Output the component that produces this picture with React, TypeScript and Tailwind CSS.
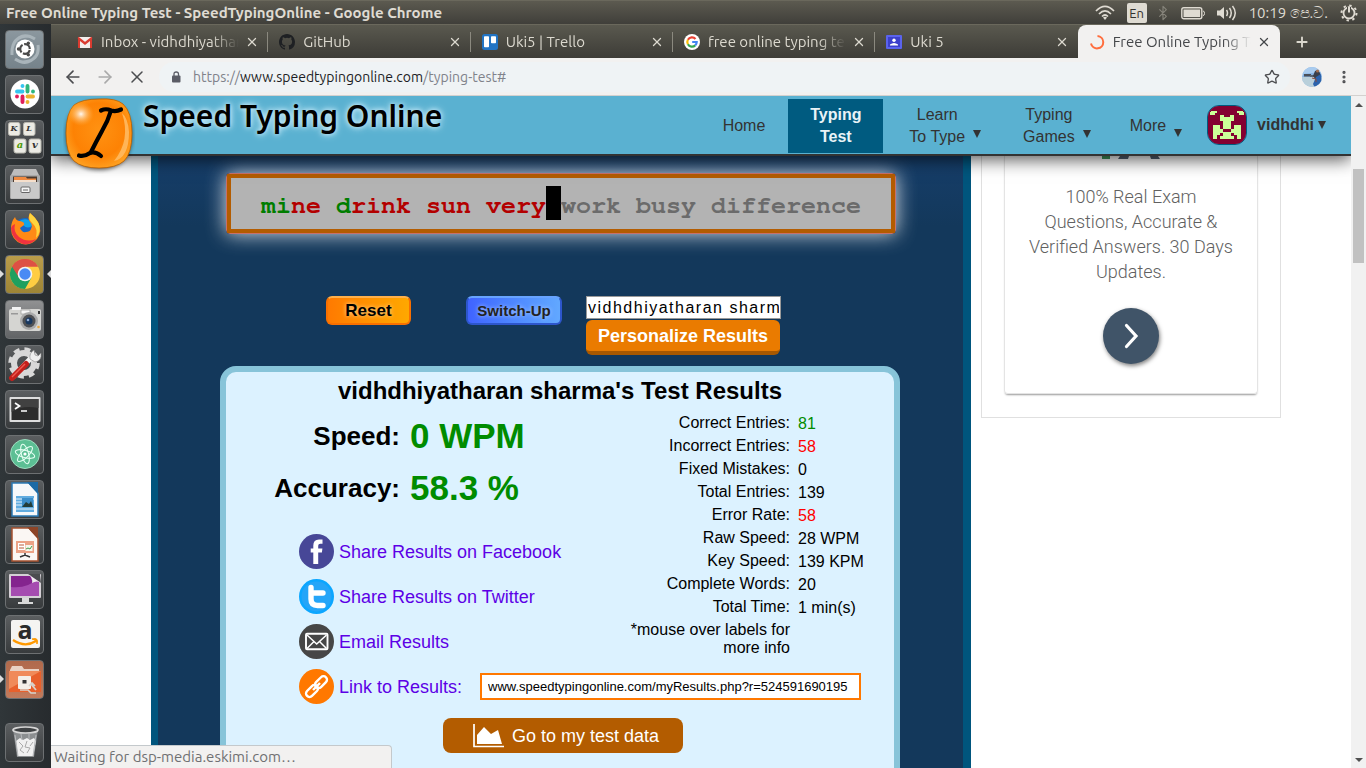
import type { ReactNode } from "react";
import { ArrowLeft, ArrowRight, X, Plus, Star, EllipsisVertical, Bluetooth } from "lucide-react";

const UI = "font-['Ubuntu','Noto_Sans','Open_Sans',sans-serif]";

/* ---------- system bar ---------- */

function SystemBar() {
  return (
    <header className="flex h-6 shrink-0 items-center justify-between border-t border-[#6a685c] bg-linear-to-b from-[#5c5a50] to-[#403f3a] pr-2 pl-1.5 text-[#dfdbd2]">
      <h1 className="text-[15px] leading-5 font-bold whitespace-nowrap">Free Online Typing Test - SpeedTypingOnline - Google Chrome</h1>
      <div className="flex items-center">
        <svg className="mr-3 h-5 w-5" viewBox="0 0 20 20" fill="none" stroke="#dfdbd2" strokeWidth="1.7">
          <path d="M1 8Q10 -1 19 8M4 11Q10 5 16 11M7 13.5Q10 10.500 13 13.500" />
          <path d="M8 14.500L10 17L12 14.500Q10 13 8 14.500Z" fill="#dfdbd2" stroke="none" />
        </svg>
        <span className="mr-2 flex h-5 w-5 items-center justify-center rounded-xs bg-[#dfdbd2] text-[13px] leading-5 text-[#33322e]">En</span>
        <Bluetooth className="mr-2.5 h-4 w-4 text-[#86847b]" strokeWidth={1.7} />
        <svg className="mr-3 h-4 w-6" viewBox="0 0 24 16">
          <rect x=".8" y="2.800" width="20" height="11" rx="2" fill="none" stroke="#dfdbd2" strokeWidth="1.4" />
          <rect x="2.500" y="4.500" width="16.600" height="7.600" fill="#dfdbd2" />
          <path d="M22 6q1.500 0 1.500 2.300T22 10.600" stroke="#dfdbd2" fill="none" />
        </svg>
        <svg className="mr-3 h-5 w-5" viewBox="0 0 20 20" fill="none" stroke="#dfdbd2" strokeWidth="1.5">
          <path d="M0 7.500h3l4-3.500v12L3 12.500H0Z" fill="#dfdbd2" stroke="none" />
          <path d="M9.500 7q2 3 0 6M12.500 5q3.500 5 0 10M15.500 3q5.500 7 0 14" />
        </svg>
        <time className="mr-3 text-[15px] leading-5 whitespace-nowrap">10:19 පෙ.ව.</time>
        <svg className="h-[18px] w-[18px]" viewBox="0 0 18 18" fill="none" stroke="#dfdbd2">
          <circle cx="9" cy="9" r="5.500" strokeWidth="1.800" />
          <circle cx="9" cy="9" r="7.500" strokeWidth="2" strokeDasharray="2.400 3.490" />
          <path d="M9 3v6" stroke="#4b4a44" strokeWidth="4" />
          <path d="M9 2.500v6" strokeWidth="2" />
        </svg>
      </div>
    </header>
  );
}

/* ---------- launcher ---------- */

function Tile({ label, tone = "bg-linear-to-b from-[#5b5e60] to-[#383b3d]", children, running, focused }: {
  label: string; tone?: string; children: ReactNode; running?: boolean; focused?: boolean;
}) {
  return (
    <button aria-label={label} className="relative flex h-10 w-[51px] shrink-0 items-center justify-center pr-0.5">
      {running && <svg className="absolute left-0 h-2 w-1" viewBox="0 0 4 8"><path d="M0 0L4 4L0 8Z" fill="#ddd" /></svg>}
      <span className={`flex h-[39px] w-[39px] items-center justify-center rounded-sm border border-[#6d7072] ${tone}`}>
        <svg className="h-9 w-9" viewBox="0 0 36 36">{children}</svg>
      </span>
      {focused && <svg className="absolute right-0 h-2 w-1" viewBox="0 0 4 8"><path d="M4 0L0 4L4 8Z" fill="#ddd" /></svg>}
    </button>
  );
}

function Launcher() {
  return (
    <nav aria-label="Launcher" className="flex w-[51px] shrink-0 flex-col gap-[5px] bg-linear-to-r from-[#303639] to-[#272b2e] pt-[5px] pb-1.5">
      <Tile label="Search" tone="bg-linear-to-b from-[#8b979e] to-[#76838b]">
        <path d="M5 24Q4 6 20 5M31 14Q33 30 16 31M8 28Q20 36 29 25M28 8Q15 0 7 12" fill="none" stroke="#a9b4ba" strokeWidth="3" />
        <circle cx="18" cy="18" r="9.500" fill="#fff" />
        <circle cx="18" cy="18" r="4.800" fill="none" stroke="#4a4a4a" strokeWidth="2.200" strokeDasharray="8.500 1.550" strokeDashoffset="-1" />
        <circle cx="11.500" cy="18" r="1.700" fill="#4a4a4a" /><circle cx="21.300" cy="12.300" r="1.700" fill="#4a4a4a" /><circle cx="21.300" cy="23.700" r="1.700" fill="#4a4a4a" />
      </Tile>
      <Tile label="Slack">
        <circle cx="18" cy="18" r="14.500" fill="#fff" />
        <g strokeWidth="3.900" strokeLinecap="round">
          <path d="M15.500 10v.1M10 15.500h5.500" stroke="#36c5f0" />
          <path d="M20.500 10v5.500M26 15.500v.1" stroke="#2eb67d" />
          <path d="M20.500 20.500H26M20.500 26v.1" stroke="#ecb22e" />
          <path d="M15.500 20.500V26M10 20.500v.1" stroke="#e01e5a" />
        </g>
      </Tile>
      <Tile label="Character map">
        <g fill="#ecebe4" stroke="#b9b8b0">
          <rect x="1.500" y="1.500" width="11.500" height="13" rx="2" /><rect x="16.500" y="1.500" width="11.500" height="13" rx="2" />
          <rect x="7" y="18" width="12" height="14" rx="2" /><rect x="22" y="18" width="12" height="14" rx="2" />
        </g>
        <g fontFamily="DejaVu Serif" fontSize="8" fontStyle="italic" fontWeight="bold" fill="#333" textAnchor="middle">
          <text x="7" y="10">K</text><text x="22" y="10">L</text><text x="13" y="27" fontSize="10" fill="#4e9a06">a</text><text x="28" y="27" fontSize="10">v</text>
        </g>
      </Tile>
      <Tile label="Files">
        <path d="M7 3h22l4 8H3Z" fill="#bdbdbd" /><rect x="3" y="9" width="30" height="24" rx="1.500" fill="#a9a9a9" />
        <rect x="6" y="10.500" width="24" height="6" fill="#4a3a30" /><path d="M7 11h12l1 1.500h9V16H7Z" fill="#f08a40" /><path d="M7 14h22v2H7Z" fill="#f5dfcc" />
        <rect x="4" y="16" width="28" height="16.500" fill="#c9c9c9" /><rect x="14" y="21" width="9" height="5.500" rx="1" fill="#f4f4f4" stroke="#666" /><path d="M16 24h5" stroke="#666" />
      </Tile>
      <Tile label="Firefox">
        <circle cx="18" cy="19" r="12" fill="#1668c9" /><path d="M11 11Q18 5 27 12Q22 20 16 14Z" fill="#13a4e8" />
        <path d="M4 17Q4 11 8 6Q9 10 13 10Q18 11 17 14L13 17Q15 22 19 21Q23 21 24 18Q26 14 23 11Q20 7 23 2Q28 6 31 11Q36 20 30 28Q24 35 15 33Q4 29 4 17Z" fill="#ff8a16" />
        <path d="M23 2Q29 7 31.500 12Q35 21 29 27Q31 17 26 13Q20 8 23 2Z" fill="#ffd53e" />
        <path d="M4 17Q5 29 16 33Q25 34 29 28Q20 32 12 26Q6 21 8 13Q5 14 4 17Z" fill="#f0333f" />
      </Tile>
      <Tile label="Google Chrome" tone="bg-linear-to-b from-[#b99c4a] to-[#9f8535]" running focused>
        <circle cx="18" cy="18" r="15" fill="#ffcd42" />
        <path d="M18 18L5 10.500A15 15 0 0 1 31 10.500H18Z" fill="#dd5144" />
        <path d="M18 18L5 10.500A15 15 0 0 0 18 33L24.500 21.500Z" fill="#1fa05f" />
        <path d="M18 10.500H31A15 15 0 0 0 5 10.500L11.500 21Z" fill="#dd5144" />
        <circle cx="18" cy="18" r="7.300" fill="#f4f4f4" /><circle cx="18" cy="18" r="5.700" fill="#4a8af4" />
      </Tile>
      <Tile label="Camera" tone="bg-linear-to-b from-[#909192] to-[#626466]">
        <rect x="2" y="8" width="32" height="22" rx="2" fill="#d5d5d2" /><rect x="5" y="6" width="9" height="3" fill="#f3f3f3" /><rect x="14" y="9" width="9" height="4" fill="#f7f7f7" stroke="#999" strokeWidth=".7" />
        <circle cx="22" cy="20" r="9" fill="#aaa" /><circle cx="22" cy="20" r="6.500" fill="#4d4f53" /><circle cx="22" cy="20" r="3.500" fill="#18375e" /><circle cx="21" cy="19" r="1.300" fill="#8ca8d0" /><rect x="31" y="10" width="2" height="3" fill="#333" />
        <rect x="4" y="12" width="7" height="1.500" fill="#999" /><circle cx="31.500" cy="26" r="1.300" fill="#ecaa45" />
      </Tile>
      <Tile label="System settings">
        <circle cx="17" cy="17" r="10" fill="none" stroke="#d8d8d8" strokeWidth="6" />
        <circle cx="17" cy="17" r="14" fill="none" stroke="#d8d8d8" strokeWidth="3.500" strokeDasharray="6 5" />
        <path d="M6 31L24 12" stroke="#f3f3f3" strokeWidth="5" /><path d="M23 13q-1-6 4-9l1 5l3 1l3-3q1 8-6 9Z" fill="#eee" stroke="#888" strokeWidth=".6" />
        <path d="M5 32L19 18" stroke="#c3201c" strokeWidth="6" strokeLinecap="round" /><path d="M5 31L18 18" stroke="#ee5b50" strokeWidth="1.500" />
      </Tile>
      <Tile label="Terminal">
        <rect x="2.500" y="6" width="31" height="25" rx="1" fill="#dedede" /><rect x="4.500" y="8" width="27" height="21" fill="#2c2c2c" /><path d="M4.500 8h27v9Q15 14 4.500 21Z" fill="#414141" />
        <path d="M8 12l4.500 3L8 18M14 20h6" stroke="#fff" fill="none" strokeWidth="1.700" />
      </Tile>
      <Tile label="Atom">
        <circle cx="18" cy="18" r="14.500" fill="#5cbf94" stroke="#9ddcbf" /><g fill="none" stroke="#e5fff3" strokeWidth="1.100">
          <ellipse cx="18" cy="18" rx="10" ry="3.600" transform="rotate(15 18 18)" /><ellipse cx="18" cy="18" rx="10" ry="3.600" transform="rotate(75 18 18)" /><ellipse cx="18" cy="18" rx="10" ry="3.600" transform="rotate(135 18 18)" />
        </g><circle cx="18" cy="18" r="1.600" fill="#fff" />
      </Tile>
      <Tile label="LibreOffice Writer">
        <path d="M5 2h17l9 10v23H5Z" fill="#f6f8fa" stroke="#2b79b5" strokeWidth="1.500" /><path d="M20 1h11v12Z" fill="#1c6aa5" />
        <rect x="9" y="15" width="18" height="16" fill="#61ace0" /><path d="M9 18h18M9 21h6M9 24h6M9 28h18" stroke="#e4f1fa" /><path d="M15 17h11v9H15Z" fill="#3b8dc9" /><path d="M15 26l4-5l3 2l2-3l2 6Z" fill="#243d38" />
      </Tile>
      <Tile label="LibreOffice Impress">
        <path d="M5 2h17l9 10v23H5Z" fill="#fbf7f4" stroke="#a6522f" strokeWidth="1.500" /><path d="M20 1h11v12Z" fill="#8d4427" />
        <rect x="9" y="15" width="18" height="12" fill="#eca286" /><rect x="11" y="17" width="7" height="7" fill="#fff" /><path d="M12 19h5M12 22h5" stroke="#bb5b3a" /><rect x="18.500" y="19" width="7" height="6" fill="#f4f7ec" /><path d="M19 23l2-1l2 1l2-3" stroke="#459a4a" fill="none" />
        <path d="M18 27v2M13 31l5-2l5 2" stroke="#333" fill="none" strokeWidth="1.500" />
      </Tile>
      <Tile label="Displays">
        <rect x="2" y="3" width="32" height="24" rx="1" fill="#d5d0d6" /><rect x="4" y="5" width="28" height="20" fill="#84248e" /><path d="M4 25V16Q20 18 32 7v18Z" fill="#a54cb0" />
        <path d="M21 3h12v1l1 8Z" fill="#4b4d4f" /><path d="M21 3Q26 7 25 12Q30 9 34 12Z" fill="#eee" /><path d="M15 27h7v4h4v2H11v-2h4Z" fill="#d9d9d9" />
      </Tile>
      <Tile label="Amazon">
        <rect x="4" y="4" width="29" height="28" rx="2" fill="#f5f4f2" /><text x="18" y="22.500" textAnchor="middle" fontFamily="Open Sans" fontSize="25" fontWeight="bold" fill="#2b2b2b">a</text>
        <path d="M6 24Q18 32 29 25" fill="none" stroke="#f90" strokeWidth="2.200" /><path d="M25 23q7-2 5 5q0-4-5-5Z" fill="#f90" stroke="#f90" />
      </Tile>
      <Tile label="Screenshots folder" tone="bg-linear-to-b from-[#b06a4c] to-[#c37a5b]" running>
        <path d="M3 9L5 5h10l2 3h15v4H3Z" fill="#e9d3c5" /><path d="M2 10h32v21H2Z" fill="#e8602c" /><path d="M2 10h32L2 28Z" fill="#f08a59" />
        <rect x="11" y="15" width="13" height="13" rx="1" fill="#f4efe8" /><rect x="15.500" y="19" width="4" height="3.500" fill="#333" /><path d="M22 25l3-3l3 3M24 23l5 6M13 29h8l3 3h5" stroke="#d8d2ca" fill="none" strokeWidth="1.700" />
      </Tile>
      <div className="flex-1" />
      <Tile label="Trash">
        <path d="M6 5h25l-4 28H10Z" fill="#8b8e90" /><ellipse cx="18.500" cy="6" rx="12.500" ry="3" fill="#3f4244" stroke="#d6d6d6" strokeWidth="1.700" />
        <path d="M9 17l4-3l3 2l4-2l3 2l4-2l2 3l-3 15H11Z" fill="#f0f0f0" /><path d="M12 18l4 4l-3 4l4 3M20 17l-2 6l5 1l-3 5M26 18l-3 4" stroke="#aaa" fill="none" /><path d="M8 11l3 21M14 10l1 6M22 10v5M29 11l-3 21" stroke="#b8babc" />
      </Tile>
    </nav>
  );
}

/* ---------- browser chrome ---------- */

const gmail = <svg className="h-4 w-4" viewBox="0 0 16 16"><rect x="1" y="3" width="14" height="11" rx="1" fill="#f3eeec" /><path d="M1 4v10h2V7l5 4l5-4v7h2V4L8 9Z" fill="#da3b30" /><path d="M1 3.500L8 9l7-5.500" fill="none" stroke="#da3b30" strokeWidth="1.600" /></svg>;
const github = <svg className="h-4 w-4" viewBox="0 0 16 16"><path fill="#1e2023" d="M8 0C3.580 0 0 3.580 0 8c0 3.540 2.290 6.530 5.470 7.590.4.070.55-.17.55-.38 0-.19-.01-.82-.01-1.490-2.010.37-2.530-.49-2.690-.94-.09-.23-.48-.94-.82-1.130-.28-.15-.68-.52-.01-.53.63-.01 1.080.58 1.230.82.72 1.210 1.870.87 2.330.66.07-.52.28-.87.51-1.070-1.780-.2-3.640-.89-3.640-3.950 0-.87.31-1.590.82-2.150-.08-.2-.36-1.020.08-2.120 0 0 .67-.21 2.200.82a7.600 7.600 0 0 1 4 0c1.530-1.040 2.200-.82 2.200-.82.44 1.100.16 1.920.08 2.120.51.56.82 1.270.82 2.150 0 3.070-1.870 3.750-3.650 3.950.29.25.54.73.54 1.480 0 1.070-.01 1.930-.01 2.200 0 .21.15.46.55.38A8 8 0 0 0 16 8c0-4.420-3.580-8-8-8Z" /></svg>;
const trello = <svg className="h-4 w-4" viewBox="0 0 16 16"><rect width="16" height="16" rx="2.500" fill="#2274c4" /><rect x="2" y="2.300" width="5" height="11" rx=".8" fill="#fff" /><rect x="9" y="2.300" width="5" height="7" rx=".8" fill="#fff" /></svg>;
const google = <svg className="h-4 w-4" viewBox="0 0 16 16" fill="none" strokeWidth="2.200"><circle cx="8" cy="8" r="8" fill="#fff" /><path d="M11.500 4.900A4.700 4.700 0 0 0 3.900 5.700" stroke="#ea4335" /><path d="M3.900 5.700a4.700 4.700 0 0 0 0 4.600" stroke="#fbbc05" /><path d="M3.900 10.300a4.700 4.700 0 0 0 7.300 1.100" stroke="#34a853" /><path d="M11.200 11.400Q12.700 10 12.700 8H8.200" stroke="#4285f4" /></svg>;
const classroom = <svg className="h-4 w-4" viewBox="0 0 16 16"><rect y="1" width="16" height="14" rx="1" fill="#5a63ee" /><rect x="2" y="3" width="12" height="10" fill="#3c40cb" /><circle cx="8" cy="6.300" r="1.700" fill="#fff" /><path d="M4 11.500V10.500Q8 7.500 12 10.500v1Z" fill="#fff" /></svg>;
const spinner = <svg className="h-4 w-4" viewBox="0 0 16 16"><path d="M8.500 2A6.200 6.200 0 1 1 2 9.500" fill="none" stroke="#ff6d3d" strokeWidth="2" /></svg>;

const tabs = [
  { title: "Inbox - vidhdhiyatharan", icon: gmail },
  { title: "GitHub", icon: github },
  { title: "Uki5 | Trello", icon: trello },
  { title: "free online typing test", icon: google },
  { title: "Uki 5", icon: classroom },
  { title: "Free Online Typing Test", icon: spinner, active: true },
];

function TabStrip() {
  return (
    <div className="flex h-[34px] shrink-0 items-stretch border-t border-[#6a685c] bg-linear-to-b from-[#5a594f] to-[#3d3c37] pl-[15px]">
      <div role="tablist" className="flex min-w-0 flex-1">
        {tabs.map((t, i) => (
          <div key={t.title} className={`flex min-w-0 flex-1 items-center ${t.active ? "rounded-t-lg bg-[#f2f1f0] text-[#45474a]" : "text-[#dcd9cf]"}`}>
            <button role="tab" aria-selected={!!t.active} className="flex min-w-0 flex-1 items-center gap-2 pl-[11px] text-left">
              <span className="shrink-0">{t.icon}</span>
              <span className="w-[138px] min-w-0 overflow-hidden text-[15px] leading-5 whitespace-nowrap [mask-image:linear-gradient(to_right,black_80%,transparent)]">{t.title}</span>
            </button>
            <button aria-label={`Close ${t.title}`} className="mr-2 ml-1 shrink-0"><X className="h-3.5 w-3.5" strokeWidth={2.2} /></button>
            <span className={`h-5 w-px shrink-0 ${i < 4 ? "bg-[#8b897f]" : ""}`} />
          </div>
        ))}
      </div>
      <button aria-label="New tab" className="flex w-[86px] items-center pl-3.5 text-[#dcd9cf]"><Plus className="h-4 w-4" strokeWidth={2.8} /></button>
    </div>
  );
}

function Toolbar() {
  return (
    <div className="flex h-[38px] shrink-0 items-center border-b border-[#d3d1cf] bg-[#f2f1f0] pr-[14px] pl-3 text-[#4c4d50]">
      <button aria-label="Back" className="mr-3"><ArrowLeft className="h-5 w-5" /></button>
      <button aria-label="Forward" className="mr-3 text-[#aaa]"><ArrowRight className="h-5 w-5" /></button>
      <button aria-label="Stop"><X className="h-5 w-5" strokeWidth={1.8} /></button>
      <div className="ml-3 flex h-[30px] flex-1 items-center rounded-full bg-[#eff3f5] pr-2.5 pl-3">
        <svg className="mr-3 h-3 w-2.5" viewBox="0 0 10 12"><rect x="1" y="4.500" width="8.500" height="7" rx="1" fill="#5a5c66" /><path d="M3 5V3q0-2 2.200-2T7.500 3v2" fill="none" stroke="#5a5c66" strokeWidth="1.300" /></svg>
        <span className="flex-1 text-sm text-[#80828a]">https://<span className="text-[#1c1d24]">www.speedtypingonline.com</span>/typing-test#</span>
        <button aria-label="Bookmark"><Star className="h-4 w-4" strokeWidth={2} /></button>
      </div>
      <button aria-label="Profile" className="mr-3.5 ml-3">
        <svg className="h-5 w-5 rounded-full" viewBox="0 0 20 20"><rect width="20" height="20" fill="#88b4e4" /><path d="M0 0h20v5L0 7Z" fill="#a9cbee" /><rect y="10" width="20" height="10" fill="#b9cfda" /><path d="M2 7h7v2.500H2Z" fill="#4a4f58" /><path d="M8 8h6v2H8Z" fill="#5c6470" /><path d="M13 4l3-1l2 3l1 5l-5 2l-3-4Z" fill="#3a3f4b" /><path d="M14 10l5-3l1 12l-7 2l-2-4Z" fill="#2c62ac" /><circle cx="15.500" cy="4" r="1.500" fill="#a66f4f" /><path d="M10 11l4 1v3" stroke="#8b4b3a" fill="none" /></svg>
      </button>
      <button aria-label="Menu"><EllipsisVertical className="h-4 w-4" strokeWidth={2.8} /></button>
    </div>
  );
}

/* ---------- site header ---------- */

function SiteLogo() {
  return (
    <svg className="h-[76px] w-[72px]" viewBox="0 0 72 76">
      <defs>
        <radialGradient id="orb" cx=".5" cy=".45" r=".65"><stop offset="0" stopColor="#ff9212" /><stop offset=".6" stopColor="#fd8204" /><stop offset="1" stopColor="#ffae2e" /></radialGradient>
        <radialGradient id="shine"><stop offset="0" stopColor="#fff" stopOpacity=".95" /><stop offset="1" stopColor="#ffb347" stopOpacity="0" /></radialGradient>
        <filter id="soft"><feGaussianBlur stdDeviation="2" /></filter>
      </defs>
      <path d="M36 3Q66 1 69 34Q70 71 37 72Q3 72 3 37Q3 3 36 3Z" fill="#000" opacity=".6" filter="url(#soft)" />
      <path d="M36 1Q53 0 60 6Q69 14 69 35Q69 55 61 63Q53 70 36 70Q19 70 11 63Q3 55 3 35Q3 15 11 7Q19 1 36 1Z" fill="url(#orb)" stroke="#b96000" strokeWidth=".8" />
      <ellipse cx="18" cy="16" rx="13" ry="12" fill="url(#shine)" />
      <path d="M59 15Q68 42 51 63Q66 60 66 34Q65 20 59 15Z" fill="#ffbc65" opacity=".85" />
      <path d="M38 12.500Q43 10 48 12.500Q53 14 58 11.500M48 12.500Q45 23 39 33Q33 44 28 54M16 57.500Q21 59 27 55Q32 53 38 58" fill="none" stroke="#000" strokeWidth="4.200" strokeLinecap="round" />
    </svg>
  );
}

function Avatar() {
  return (
    <svg className="h-10 w-10 shrink-0 rounded-xl border border-[#005b80]" viewBox="0 0 40 40" shapeRendering="crispEdges">
      <rect width="40" height="40" fill="#840031" />
      <path fill="#ccff99" d="M4 5h5v2H7v2H2V7ZM36 5h-5v2h2v2h5V7ZM13 9h4v3h6V9h4v7h-3v8h3v-4h8v15h-4v-4h-4v-3h-3v4h3v3H13v-3h3v-4h-3v3H9v4H5V20h8v4h3v-8h-3Z" />
      <path fill="#840031" d="M16 24h8v3h-8Z" />
    </svg>
  );
}

function Caret({ className = "" }: { className?: string }) {
  return <svg className={`h-2 w-2 shrink-0 ${className}`} viewBox="0 0 8 8"><path d="M0 0h8L4 8Z" fill="#333" /></svg>;
}

function SiteHeader() {
  return (
    <header className="relative z-10 flex h-[60px] shrink-0 items-center border-b-2 border-[#333] bg-[#5ab1d1] pr-[25px] font-['Liberation_Sans',Arial,sans-serif] leading-[22px] text-[#333] shadow-[0_4px_16px_rgba(0,0,0,0.65)]">
      <a href="#" aria-label="Speed Typing Online" className="flex flex-1 items-start gap-2 self-start pl-3 text-black no-underline">
        <span className="-mb-5 pt-0.5"><SiteLogo /></span>
        <span className="font-['Noto_Sans','Open_Sans',sans-serif] text-[30px] leading-10 font-semibold whitespace-nowrap [text-shadow:0_0_5px_#d9f2fc,0_0_8px_#c0e8f8]">Speed Typing Online</span>
      </a>
      <nav className="flex items-center pt-0.5">
        <a href="#" className="mr-[23px]">Home</a>
        <a href="#" className="mr-[26px] w-[95px] bg-[#005b80] py-[5px] text-center font-bold text-[#e8f3f7]">Typing<br />Test</a>
        <a href="#" className="mr-[42px] flex items-end gap-2 text-center"><span>Learn<br />To Type</span><Caret className="mb-2.5" /></a>
        <a href="#" className="mr-[39px] flex items-end gap-2 text-center"><span>Typing<br />Games</span><Caret className="mb-2.5" /></a>
        <a href="#" className="mr-[25px] flex items-end gap-2"><span>More</span><Caret /></a>
      </nav>
      <a href="#" className="flex items-center gap-2.5 font-bold"><Avatar /><span className="flex items-center gap-1">vidhdhi<Caret /></span></a>
    </header>
  );
}

/* ---------- page body ---------- */

const stats = [
  ["Correct Entries:", "81", "text-[#008c00]"],
  ["Incorrect Entries:", "58", "text-[#ff0000]"],
  ["Fixed Mistakes:", "0", "text-black"],
  ["Total Entries:", "139", "text-black"],
  ["Error Rate:", "58", "text-[#ff0000]"],
  ["Raw Speed:", "28 WPM", "text-black"],
  ["Key Speed:", "139 KPM", "text-black"],
  ["Complete Words:", "20", "text-black"],
  ["Total Time:", "1 min(s)", "text-black"],
];

function TypingBox() {
  return (
    <div className="ml-[68px] w-[670px] rounded-sm border border-[#c9706a] shadow-[0_0_20px_rgba(255,255,255,0.85)]">
      <div className="flex h-[59px] items-center justify-center border-4 border-[#b35c00] bg-[#b3b3b3] pt-1 font-['Courier_10_Pitch','FreeMono','Courier_New','Liberation_Mono',monospace] text-[25px] leading-[34px] font-bold whitespace-pre text-[#6b6b6b]">
        <span className="text-[#007d00]">mi</span><span className="text-[#b30000]">ne </span>
        <span className="text-[#007d00]">d</span><span className="text-[#b30000]">rink sun very</span>
        <span className="-mt-1.5 h-[34px] bg-black"> </span>
        <span>work busy difference</span>
      </div>
    </div>
  );
}

function ShareRow({ icon, label }: { icon: ReactNode; label: string }) {
  return (
    <li className="flex h-[45px] items-center">
      <a href="#" className="flex items-center gap-[5px]">{icon}{label}</a>
    </li>
  );
}

const fb = <svg className="h-[35px] w-[35px]" viewBox="0 0 35 35"><circle cx="17.500" cy="17.500" r="17.500" fill="#474797" /><path d="M14.300 30V18.500h-2.600v-4h2.600v-3Q14.300 5.500 20 5.500h3.500v4.200h-2.300q-2 0-2 2v2.800h4.200l-.5 4h-3.700V30Z" fill="#fff" /></svg>;
const tw = <svg className="h-[35px] w-[35px]" viewBox="0 0 35 35"><circle cx="17.500" cy="17.500" r="17.500" fill="#0ba6ff" /><circle cx="17.500" cy="17.500" r="15" fill="#25a5f8" /><path d="M12 8.500V20q0 6.500 6.500 6.500h5.500M12 14h12" fill="none" stroke="#fff" strokeWidth="5.400" strokeLinecap="round" /></svg>;
const mail = <svg className="h-[35px] w-[35px]" viewBox="0 0 35 35" fill="none" stroke="#fff"><circle cx="17.500" cy="17.500" r="17.500" fill="#464646" stroke="none" /><rect x="7" y="9.700" width="21.500" height="15.500" rx="1" strokeWidth="1.900" /><path d="M8 11l9.700 9L27.500 11M8 24.500l7-7M27.500 24.500l-7-7" strokeWidth="1.500" /></svg>;
const link = <svg className="h-[35px] w-[35px] shrink-0" viewBox="0 0 35 35" fill="none" stroke="#fff" strokeWidth="2.400"><circle cx="17.500" cy="17.500" r="17.500" fill="#ff7800" stroke="none" /><rect x="15" y="9.700" width="14" height="7" rx="3.500" transform="rotate(-45 22 13.200)" /><rect x="6" y="18.500" width="14" height="7" rx="3.500" transform="rotate(-45 13 22)" /><path d="M14 21l7-7" /></svg>;

function Results() {
  return (
    <section className="ml-[62px] w-[680px] rounded-t-2xl border-6 border-[#87c4d9] bg-[#dcf2ff] pb-24 text-black">
      <h2 className="text-center text-2xl leading-[38px] font-bold">vidhdhiyatharan sharma's Test Results</h2>
      <div className="flex justify-between">
        <div>
          <dl className="grid grid-cols-[174px_auto] items-center gap-x-2.5 font-bold">
            <dt className="text-right text-[26px]">Speed:</dt><dd className="text-[35px] leading-[52px] text-[#008c00]">0 WPM</dd>
            <dt className="text-right text-[26px]">Accuracy:</dt><dd className="text-[35px] leading-[52px] text-[#008c00]">58.3 %</dd>
          </dl>
          <ul className="pt-[15px] pl-[73px] text-lg text-[#5c00e6]">
            <ShareRow icon={fb} label="Share Results on Facebook" />
            <ShareRow icon={tw} label="Share Results on Twitter" />
            <ShareRow icon={mail} label="Email Results" />
          </ul>
        </div>
        <table className="mt-0.5 mr-2.5 self-start text-base">
          <tbody>
            {stats.map(([label, value, tone]) => (
              <tr key={label} className="h-[23px]">
                <th scope="row" className="w-[166px] p-0 text-right align-top leading-[22px] font-normal">{label}</th>
                <td className={`w-[94px] p-0 pl-2 align-bottom leading-[22px] ${tone}`}>{value}</td>
              </tr>
            ))}
            <tr><td className="py-0.5 text-right leading-[18px]">*mouse over labels for<br />more info</td><td /></tr>
          </tbody>
        </table>
      </div>
      <div className="flex h-[45px] items-center pl-[73px]">
        <label htmlFor="result-link" className="flex w-[181px] items-center gap-[5px] text-lg text-[#5c00e6]">{link}Link to Results:</label>
        <input id="result-link" readOnly className="h-[27px] w-[381px] border-2 border-[#ff7800] bg-white px-1.5 text-[13px] outline-none" defaultValue="www.speedtypingonline.com/myResults.php?r=524591690195" />
      </div>
      <button className="mt-[9px] ml-[217px] flex h-[35px] w-60 items-center gap-2 rounded-lg bg-[#b35c00] pl-[30px] text-lg text-white">
        <svg className="h-6 w-[31px]" viewBox="0 0 31 24"><path d="M1 0V22.500H31" fill="none" stroke="#fff" strokeWidth="1.700" /><path d="M4 20V11L11 3L18 10L25 6L29 20Z" fill="#fff" /></svg>
        Go to my test data
      </button>
    </section>
  );
}

function Ad() {
  return (
    <aside className="h-[262px] w-[300px] shrink-0 border border-t-0 border-[#e0e0e0] px-[22px] pb-[23px]">
      <a href="#" className="flex h-full flex-col items-center rounded-b-sm border border-t-0 border-[#e4e4e4] text-center shadow-[0_2px_2px_-1px_rgba(0,0,0,0.4)]">
        <svg className="h-1 w-[60px] shrink-0" viewBox="0 0 60 4"><path d="M1 0h8v3H1Z" fill="#42955c" /><path d="M19 0h9l-1 3H17ZM49 0h8l2 3h-9Z" fill="#536070" /></svg>
        <p className="mt-6 font-['Roboto',sans-serif] text-lg leading-[25px] font-light text-[#616161]">100% Real Exam<br />Questions, Accurate &amp;<br />Verified Answers. 30 Days<br />Updates.</p>
        <span className="mt-6 flex h-14 w-14 items-center justify-center rounded-full bg-[#405468] shadow-[1px_2px_4px_rgba(0,0,0,0.5)]">
          <svg className="h-7 w-4" viewBox="0 0 16 28"><path d="M3.500 3.500L13 14L3.500 24.500" fill="none" stroke="#fff" strokeWidth="3.200" strokeLinecap="round" /></svg>
        </span>
      </a>
    </aside>
  );
}

function ScrollBar() {
  return (
    <div className="flex w-[15px] shrink-0 flex-col items-center bg-[#f1f1f1]">
      <button aria-label="Scroll up" className="flex h-[17px] items-center"><svg className="h-1 w-2" viewBox="0 0 8 4"><path d="M0 4L4 0L8 4Z" fill="#505050" /></svg></button>
      <div className="mt-14 h-[94px] w-[11px] bg-[#c1c1c1]" />
      <div className="flex-1" />
      <button aria-label="Scroll down" className="flex h-[17px] items-center"><svg className="h-1 w-2" viewBox="0 0 8 4"><path d="M0 0L4 4L8 0Z" fill="#505050" /></svg></button>
    </div>
  );
}

export default function App() {
  return (
    <div className={`flex h-screen flex-col overflow-hidden bg-white ${UI}`}>
      <SystemBar />
      <div className="flex min-h-0 flex-1">
        <Launcher />
        <div className="relative flex min-w-0 flex-1 flex-col">
          <TabStrip />
          <Toolbar />
          <div className="flex min-h-0 flex-1">
            <div className="flex min-w-0 flex-1 flex-col overflow-hidden">
              <SiteHeader />
              <div className="flex items-start gap-2.5 pl-[100px]">
                <main className="w-[820px] shrink-0 border-r-8 border-l-7 border-[#00557d] bg-[#13385b] bg-linear-to-b from-[#163e6a] to-[#13385b] to-10% pt-[17px] font-['Liberation_Sans',Arial,sans-serif]">
                  <TypingBox />
                  <div className="mt-[62px] mb-[11px] flex items-start pl-[168px]">
                    <button className="mr-[55px] h-[29px] w-[85px] rounded-md border-2 border-[#f97000] border-t-[#ffb04a] bg-linear-to-r from-[#ff7a00] to-[#ffa800] text-[17px] leading-none font-bold text-black [text-shadow:0_0_4px_#ffd9a0]">Reset</button>
                    <button className="mr-6 h-[29px] w-24 rounded-md border-2 border-[#2d56cc] border-t-[#67a3ff] bg-linear-to-r from-[#4063ff] to-[#62a8ff] text-[15px] leading-none font-bold text-[#222] [text-shadow:0_0_4px_#b0ccff]">Switch-Up</button>
                    <div className="flex w-[195px] flex-col gap-px">
                      <input aria-label="Name" className="h-[23px] w-full border border-[#999] bg-white px-px text-base tracking-[1.5px] text-black outline-none" defaultValue="vidhdhiyatharan sharma" />
                      <button className="h-[35px] w-[194px] rounded-md border-b-4 border-[#a85800] bg-[#ea7b00] text-lg leading-none font-bold text-white">Personalize Results</button>
                    </div>
                  </div>
                  <Results />
                </main>
                <Ad />
              </div>
            </div>
            <ScrollBar />
          </div>
          <div role="status" className="absolute bottom-0 left-0 z-20 h-[23px] w-[341px] rounded-tr-sm border-t border-r border-[#c4c9cc] bg-[#f2f1f0] pl-[3px] text-[15px] leading-[22px] text-[#6f7072]">Waiting for dsp-media.eskimi.com…</div>
        </div>
      </div>
    </div>
  );
}
